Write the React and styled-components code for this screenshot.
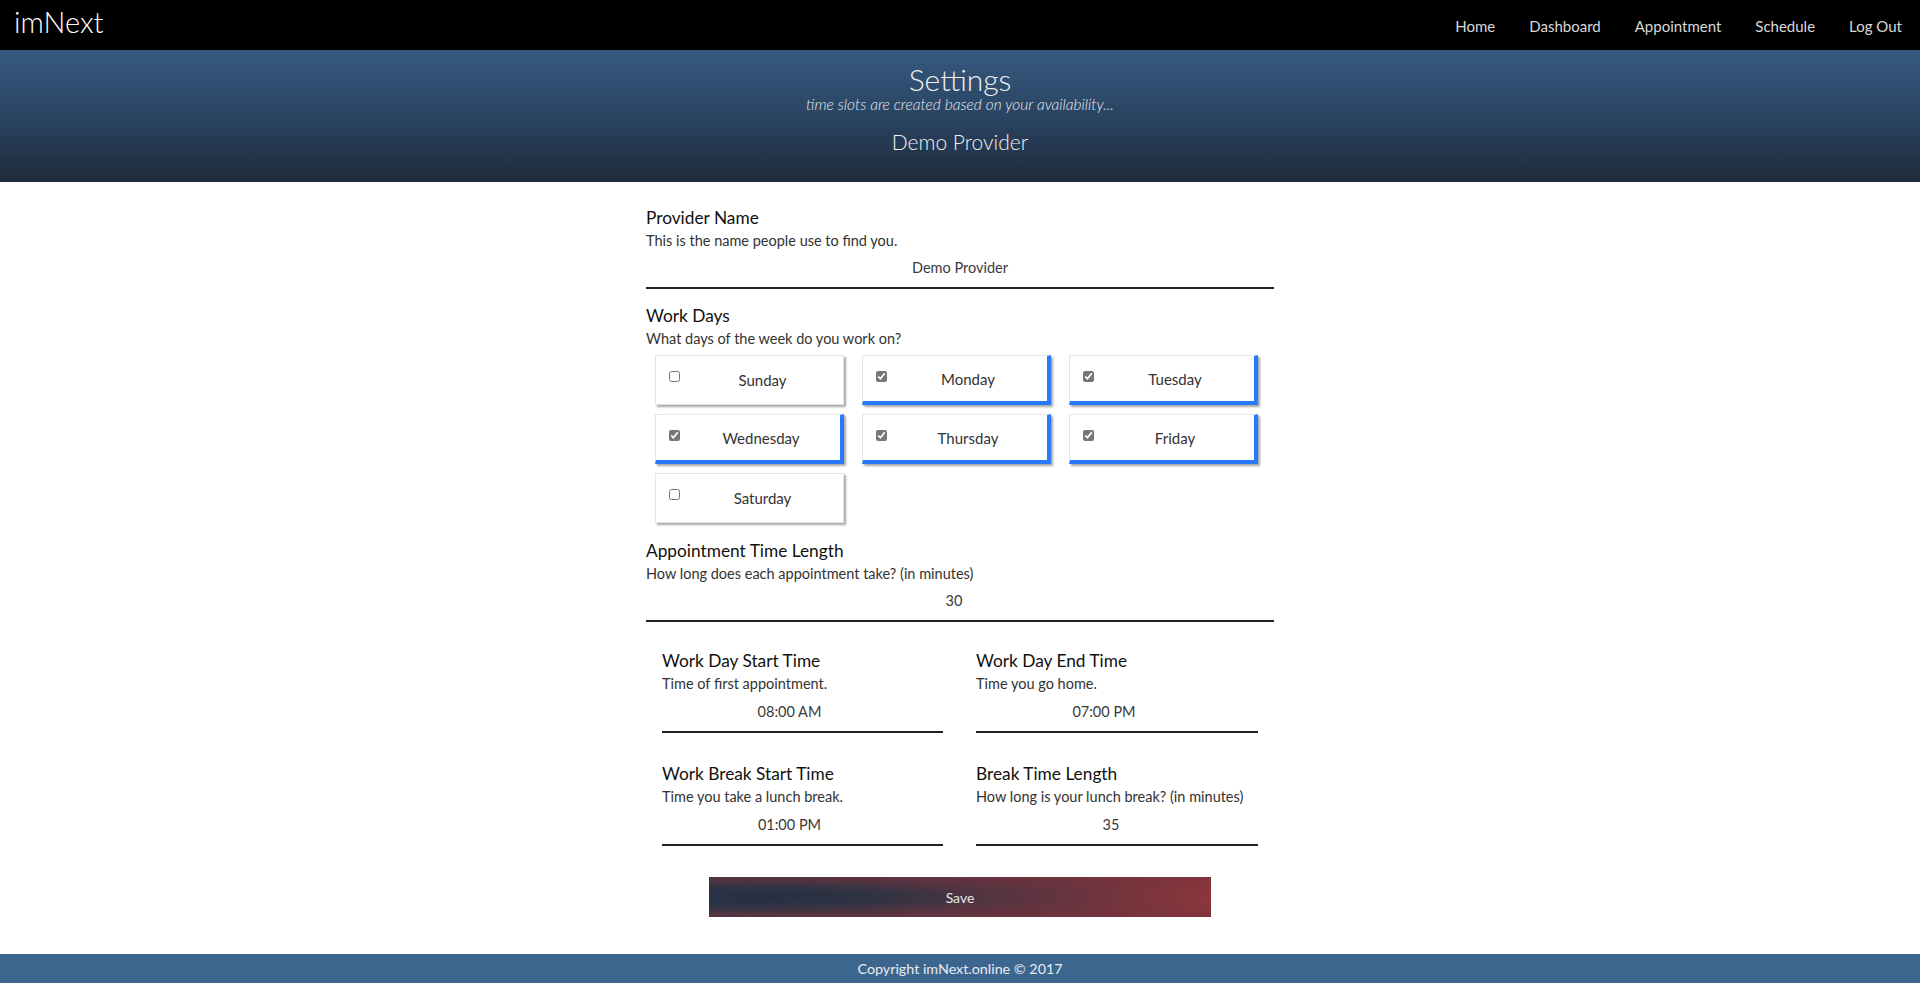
import React from "react";
import styled, { createGlobalStyle } from "styled-components";

const Global = createGlobalStyle`
  * { box-sizing: border-box; }
  html, body { margin: 0; padding: 0; background: #fff; }
  body { font-family: Lato, "Noto Sans", "Liberation Sans", sans-serif; color: #222; }
`;

const Page = styled.div`
  display: flex;
  flex-direction: column;
  min-height: 983px;
`;

const NavBar = styled.nav`
  height: 50px;
  background: #000;
  display: flex;
  align-items: center;
  justify-content: space-between;
  padding: 0 18px 0 14px;
`;

const Brand = styled.div`
  color: #fff;
  font-size: 29px;
  font-weight: 300;
  line-height: 34px;
  margin-top: -6px;
`;

const NavLinks = styled.div`
  display: flex;
  gap: 34px;
  margin-top: 2px;
`;

const NavLink = styled.a`
  color: #d8d8d8;
  font-size: 15px;
  text-decoration: none;
`;

const Hero = styled.header`
  height: 132px;
  background: linear-gradient(to bottom, #36597f 0%, #2a4463 50%, #1e2b3b 100%);
  color: #f0f0f0;
  text-align: center;
  padding-top: 12px;
`;

const HeroTitle = styled.h1`
  margin: 0;
  font-size: 30px;
  font-weight: 300;
  line-height: 34px;
`;

const HeroSub = styled.div`
  font-size: 15.5px;
  font-style: italic;
  line-height: 18px;
  font-weight: 300;
  margin-top: -1px;
  color: #e4e8ee;
`;

const HeroName = styled.div`
  font-size: 21px;
  line-height: 26px;
  margin-top: 16px;
  font-weight: 300;
`;

const Main = styled.main`
  flex: 1;
  width: 628px;
  margin: 0 auto;
  padding-top: 25px;
`;

const Section = styled.section`
  display: flex;
  flex-direction: column;
  margin-bottom: ${(p) => p.$mb ?? 16}px;
`;

const Label = styled.div`
  font-size: 17.3px;
  line-height: 22px;
  color: #111;
`;

const Hint = styled.div`
  font-size: 14.5px;
  line-height: 20px;
  color: #333;
  margin-top: 2px;
`;

const Input = styled.input`
  height: 37px;
  padding: 0 ${(p) => p.$pr || 0}px 5px 0;
  line-height: 30px;
  border: none;
  border-bottom: 2px solid #222;
  text-align: center;
  font-family: inherit;
  font-size: 14.5px;
  color: #3a3a3a;
  background: transparent;
  outline: none;
  width: 100%;
  margin-top: ${(p) => p.$mt ?? 1}px;
`;

const DaysGrid = styled.div`
  display: grid;
  grid-template-columns: repeat(3, 189px);
  column-gap: 18px;
  row-gap: 9px;
  padding-left: 9px;
  margin-top: 6px;
`;

const DayCard = styled.label`
  height: 50px;
  display: flex;
  align-items: center;
  position: relative;
  background: #fff;
  border: 1px solid #e6e6e6;
  border-right: ${(p) => (p.$on ? "4px solid #2979ff" : "1px solid #e6e6e6")};
  border-bottom: ${(p) => (p.$on ? "4px solid #2979ff" : "1px solid #e6e6e6")};
  box-shadow: 2px 2px 2px rgba(0, 0, 0, 0.35);
  font-size: 15px;
  color: #333;
`;

const DayCheck = styled.input`
  position: absolute;
  left: 13px;
  top: 15px;
  width: 11px;
  height: 11px;
  margin: 0;
  accent-color: #777;
`;

const DayText = styled.span`
  flex: 1;
  text-align: center;
  padding-left: 26px;
  margin-top: ${(p) => (p.$on ? 1 : -1)}px;
`;

const TimesGrid = styled.div`
  display: grid;
  grid-template-columns: 281px 282px;
  column-gap: 33px;
  row-gap: 30px;
  padding: 28px 16px 0;
`;

const Field = styled.div`
  display: flex;
  flex-direction: column;
`;

const SaveRow = styled.div`
  display: flex;
  justify-content: center;
  margin-top: 31px;
  margin-bottom: 37px;
`;

const SaveButton = styled.button`
  width: 502px;
  height: 40px;
  border: none;
  color: #e6e6e6;
  font-family: inherit;
  font-size: 14px;
  background:
    radial-gradient(ellipse 45% 40% at 12% 50%, rgba(36, 48, 66, 0.95) 0%, rgba(36, 48, 66, 0) 100%),
    linear-gradient(to bottom, rgba(120, 50, 60, 0.55) 0%, rgba(0, 0, 0, 0) 35%, rgba(0, 0, 0, 0) 65%, rgba(120, 50, 60, 0.55) 100%),
    linear-gradient(to right, #2c3547 0%, #3c3543 30%, #5e3440 65%, #8b363b 100%);
`;

const Footer = styled.footer`
  height: 29px;
  background: #3d668f;
  color: #e8ecf0;
  font-size: 14.3px;
  display: flex;
  align-items: center;
  justify-content: center;
`;

const days = [
  ["Sunday", false],
  ["Monday", true],
  ["Tuesday", true],
  ["Wednesday", true],
  ["Thursday", true],
  ["Friday", true],
  ["Saturday", false],
];

const times = [
  ["Work Day Start Time", "Time of first appointment.", "08:00 AM", 26],
  ["Work Day End Time", "Time you go home.", "07:00 PM", 26],
  ["Work Break Start Time", "Time you take a lunch break.", "01:00 PM", 26],
  ["Break Time Length", "How long is your lunch break? (in minutes)", "35", 12],
];

export default function App() {
  return (
    <Page>
      <Global />
      <NavBar>
        <Brand>imNext</Brand>
        <NavLinks>
          {["Home", "Dashboard", "Appointment", "Schedule", "Log Out"].map((l) => (
            <NavLink key={l} href="#">{l}</NavLink>
          ))}
        </NavLinks>
      </NavBar>
      <Hero>
        <HeroTitle>Settings</HeroTitle>
        <HeroSub>time slots are created based on your availability...</HeroSub>
        <HeroName>Demo Provider</HeroName>
      </Hero>
      <Main>
        <Section>
          <Label>Provider Name</Label>
          <Hint>This is the name people use to find you.</Hint>
          <Input defaultValue="Demo Provider" />
        </Section>
        <Section $mb={17}>
          <Label>Work Days</Label>
          <Hint>What days of the week do you work on?</Hint>
          <DaysGrid>
            {days.map(([d, on]) => (
              <DayCard key={d} $on={on}>
                <DayCheck type="checkbox" defaultChecked={on} />
                <DayText $on={on}>{d}</DayText>
              </DayCard>
            ))}
          </DaysGrid>
        </Section>
        <Section $mb={0}>
          <Label>Appointment Time Length</Label>
          <Hint>How long does each appointment take? (in minutes)</Hint>
          <Input defaultValue="30" $mt={1} $pr={12} />
        </Section>
        <TimesGrid>
          {times.map(([l, h, v, pr]) => (
            <Field key={l}>
              <Label>{l}</Label>
              <Hint>{h}</Hint>
              <Input defaultValue={v} $mt={2} $pr={pr} />
            </Field>
          ))}
        </TimesGrid>
        <SaveRow>
          <SaveButton>Save</SaveButton>
        </SaveRow>
      </Main>
      <Footer>Copyright imNext.online © 2017</Footer>
    </Page>
  );
}
